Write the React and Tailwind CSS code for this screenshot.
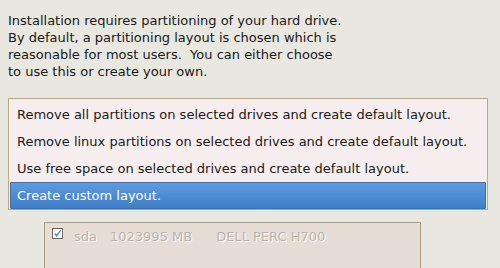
export default function App() {
  const options = [
    "Remove all partitions on selected drives and create default layout.",
    "Remove linux partitions on selected drives and create default layout.",
    "Use free space on selected drives and create default layout.",
    "Create custom layout.",
  ];
  const selected = 3;

  return (
    <div className="h-[268px] w-[500px] overflow-hidden bg-[#e8e7e0] font-['DejaVu_Sans',sans-serif] text-[13px] text-[#1a1a1a]">
      <p className="px-2 pt-3 leading-[17px]">
        Installation requires partitioning of your hard drive.
        <br />
        By default, a partitioning layout is chosen which is
        <br />
        reasonable for most users.&nbsp; You can either choose
        <br />
        to use this or create your own.
      </p>

      <div className="ml-2 mt-[18px] flex h-[112px] w-[480px] flex-col border border-[#b9aa8c] bg-[#f6eeee] px-px pt-[2px]">
        {options.map((label, i) =>
          i === selected ? (
            <div
              key={label}
              className="flex h-[27px] items-center rounded-[1px] border border-[#3b6ea9] bg-gradient-to-b from-[#5e9ade] to-[#3f7ec6] pl-[6px] text-white"
            >
              {label}
            </div>
          ) : (
            <div key={label} className="flex h-[27px] items-center pl-[7px]">
              {label}
            </div>
          )
        )}
      </div>

      <div className="ml-[44px] mt-[12px] h-[60px] w-[377px] border border-[#a99b87] bg-[#e6ddd6]">
        <div className="flex items-start pl-[7px] pt-[5px] leading-[15px] text-[#bab3ab] [text-shadow:1px_1px_0_#ffffff]">
          <span className="flex h-[11px] w-[11px] items-center justify-center border border-[#6e655a] bg-white">
            <svg viewBox="0 0 10 10" className="h-[9px] w-[9px]">
              <path d="M2 5 L4 7.5 L8.5 1.5" fill="none" stroke="#4a8ad0" strokeWidth="1.6" />
            </svg>
          </span>
          <span className="ml-[11px] mt-[1px]">sda</span>
          <span className="ml-[13px] mt-[1px]">1023995 MB</span>
          <span className="ml-[24px] mt-[1px]">DELL PERC H700</span>
        </div>
      </div>
    </div>
  );
}
